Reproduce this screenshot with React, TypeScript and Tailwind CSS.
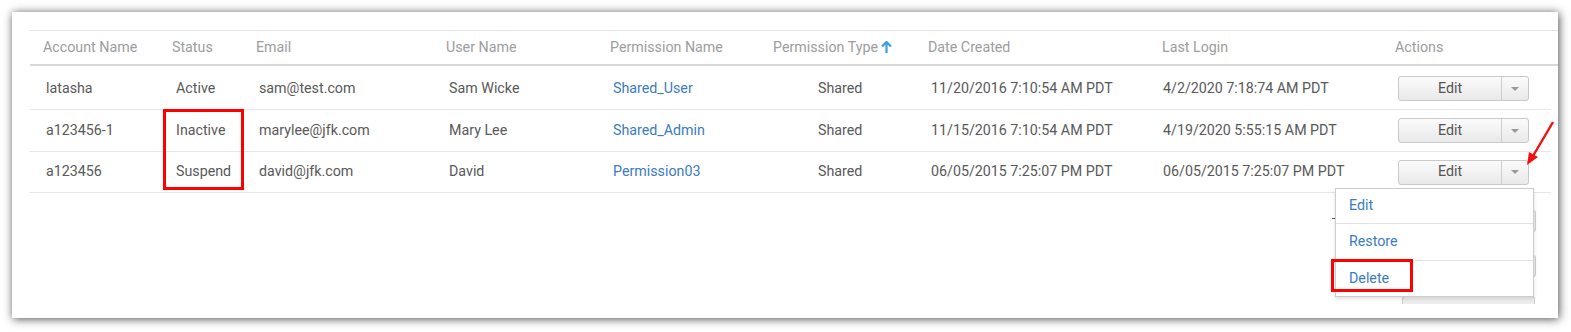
import React from "react";

const cols = "grid grid-cols-[129px_84px_190px_164px_163px_155px_234px_233px_169px]";

const rows = [
  {
    account: "latasha",
    status: "Active",
    email: "sam@test.com",
    user: "Sam Wicke",
    permission: "Shared_User",
    type: "Shared",
    created: "11/20/2016 7:10:54 AM PDT",
    login: "4/2/2020 7:18:74 AM PDT",
    h: "h-[44px] pt-[2px]",
  },
  {
    account: "a123456-1",
    status: "Inactive",
    email: "marylee@jfk.com",
    user: "Mary Lee",
    permission: "Shared_Admin",
    type: "Shared",
    created: "11/15/2016 7:10:54 AM PDT",
    login: "4/19/2020 5:55:15 AM PDT",
    h: "h-[42px]",
  },
  {
    account: "a123456",
    status: "Suspend",
    email: "david@jfk.com",
    user: "David",
    permission: "Permission03",
    type: "Shared",
    created: "06/05/2015 7:25:07 PM PDT",
    login: "06/05/2015 7:25:07 PM PDT",
    h: "h-[41px]",
  },
];

function SplitButton() {
  return (
    <div className="flex h-[25px] w-[131px] rounded-[3px] border border-[#c9c9c9] bg-gradient-to-b from-[#fbfbfb] to-[#e9e9e9] text-[#555]">
      <div className="flex flex-1 items-center justify-center">Edit</div>
      <div className="flex w-[27px] items-center justify-center border-l border-[#cfcfcf]">
        <span className="h-0 w-0 border-x-[4px] border-t-[4px] border-x-transparent border-t-[#9a9a9a]" />
      </div>
    </div>
  );
}

export default function App() {
  return (
    <div className="h-[332px] w-[1571px] overflow-hidden bg-white pl-[12px] pt-[12px] font-['Roboto',sans-serif] text-[14.25px]">
      <div className="relative h-[306px] w-[1546px] bg-white pl-[18px] pt-[18px] shadow-[1px_1px_9px_rgba(0,0,0,0.7)]">
        {/* Header */}
        <div className="w-[1528px] border-t border-b-2 border-t-[#e4e4e4] border-b-[#d5d8dc]">
          <div className={`${cols} h-[33px] items-center text-[#9d9d9d]`}>
            <div className="pl-[13px]">Account Name</div>
            <div className="pl-[13px]">Status</div>
            <div className="pl-[13px]">Email</div>
            <div className="pl-[13px]">User Name</div>
            <div className="pl-[13px]">Permission Name</div>
            <div className="flex items-center gap-[3px] pl-[13px]">
              Permission Type
              <svg width="11" height="13" viewBox="0 0 11 13">
                <path d="M5.5 1 L5.5 12 M1 5.5 L5.5 1 L10 5.5" stroke="#3d9fdc" strokeWidth="2.2" fill="none" />
              </svg>
            </div>
            <div className="pl-[13px]">Date Created</div>
            <div className="pl-[13px]">Last Login</div>
            <div className="pl-[13px]">Actions</div>
          </div>
        </div>

        {/* Rows */}
        <div className="w-[1521px]">
          {rows.map((r, i) => (
            <div key={i} className={`${cols} ${r.h} items-center border-b border-[#e6e6e6] text-[#595959]`}>
              <div className="pl-[16px]">{r.account}</div>
              <div className="pl-[17px]">{r.status}</div>
              <div className="pl-[16px]">{r.email}</div>
              <div className="pl-[16px]">{r.user}</div>
              <div className="pl-[16px] text-[#3b7cc0]">{r.permission}</div>
              <div className="pl-[58px]">{r.type}</div>
              <div className="pl-[16px]">{r.created}</div>
              <div className="pl-[14px]">{r.login}</div>
              <div className="pl-[16px]">
                <SplitButton />
              </div>
            </div>
          ))}
        </div>

        {/* bits of a button lying behind the menu */}
        <div className="absolute left-[1390px] top-[284px] h-[8px] w-[133px] rounded-t-[3px] border border-b-0 border-[#cfcfcf] bg-[#ededed]" />
        <div className="absolute left-[1520px] top-[198px] h-[22px] w-[4px] rounded-r-[3px] border border-l-0 border-[#cfcfcf] bg-[#ededed]" />
        <div className="absolute left-[1520px] top-[243px] h-[22px] w-[4px] rounded-r-[3px] border border-l-0 border-[#cfcfcf] bg-[#ededed]" />
        <div className="absolute left-[1320px] top-[206px] h-[1px] w-[4px] bg-[#555]" />

        {/* Dropdown menu */}
        <div className="absolute left-[1323px] top-[176px] w-[199px] border border-[#cdcdcd] bg-white text-[#3b7cc0] shadow-[0_2px_4px_rgba(0,0,0,0.12)]">
          <div className="flex h-[35px] items-center border-b border-[#e2e2e2] pl-[13px]">Edit</div>
          <div className="flex h-[37px] items-center border-b border-[#e2e2e2] pl-[13px]">Restore</div>
          <div className="flex h-[35px] items-center pl-[13px]">Delete</div>
        </div>

        {/* Annotations */}
        <div className="absolute left-[151px] top-[97px] h-[81px] w-[81px] border-[3px] border-[#ff0000]" />
        <div className="absolute left-[1319px] top-[247px] h-[33px] w-[82px] border-[3px] border-[#ff0000]" />
        <svg className="absolute left-[1508px] top-[104px]" width="40" height="52" viewBox="0 0 40 52">
          <path d="M33 6 L13 40" stroke="#f01010" strokeWidth="2.4" fill="none" />
          <path d="M7 49 L9 36 L18 41 Z" fill="#f01010" />
        </svg>
      </div>
    </div>
  );
}
